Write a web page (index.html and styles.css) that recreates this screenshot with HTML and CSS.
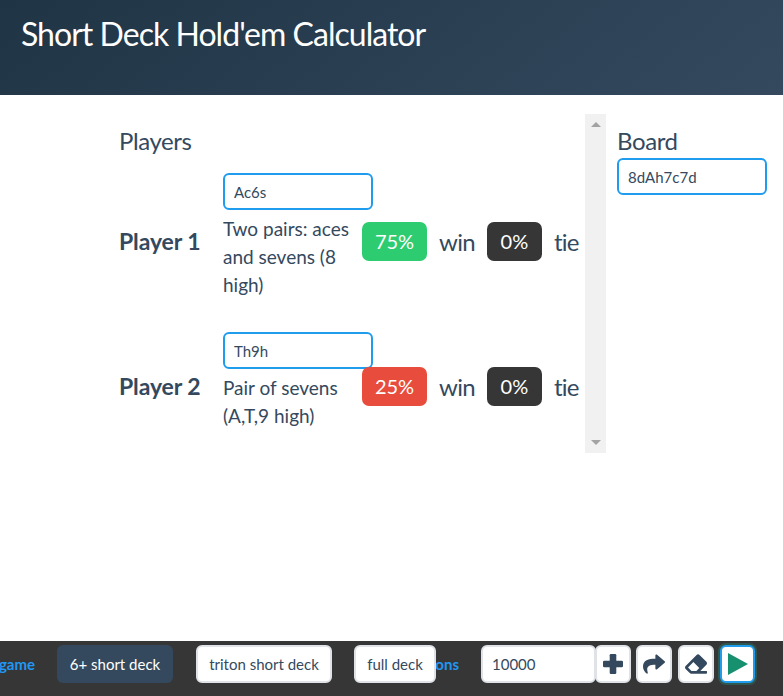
FILE: index.html
```html
<!DOCTYPE html>
<html lang="en">
<head>
    <meta charset="UTF-8">
    <meta name="viewport" content="width=device-width, initial-scale=1.0">
    <title>Short Deck Hold'em Calculator</title>
    <link rel="stylesheet" href="styles.css">
</head>
<body>
    <header class="hero">
        <h1>Short Deck Hold'em Calculator</h1>
    </header>
    <main class="content">
        <section class="players-panel">
            <div class="players-list">
                <h2 class="section-title">Players</h2>
                <div class="player">
                    <div class="player-name">Player 1</div>
                    <div class="player-hand">
                        <input class="card-input" type="text" value="Ac6s">
                        <p class="hand-text">Two pairs: aces and sevens (8 high)</p>
                    </div>
                    <div class="player-result">
                        <span class="tag tag-win">75%</span>
                        <span class="result-word">win</span>
                        <span class="tag tag-tie">0%</span>
                        <span class="result-word">tie</span>
                    </div>
                </div>
                <div class="player">
                    <div class="player-name">Player 2</div>
                    <div class="player-hand">
                        <input class="card-input" type="text" value="Th9h">
                        <p class="hand-text">Pair of sevens (A,T,9 high)</p>
                    </div>
                    <div class="player-result">
                        <span class="tag tag-lose">25%</span>
                        <span class="result-word">win</span>
                        <span class="tag tag-tie">0%</span>
                        <span class="result-word">tie</span>
                    </div>
                </div>
            </div>
            <div class="scrollbar">
                <span class="arrow-up"></span>
                <span class="arrow-down"></span>
            </div>
        </section>
        <section class="board-panel">
            <h2 class="section-title">Board</h2>
            <input class="card-input" type="text" value="8dAh7c7d">
        </section>
    </main>
    <footer class="toolbar">
        <span class="field-label label-game">game</span>
        <button class="btn btn-active btn-short">6+ short deck</button>
        <button class="btn btn-triton">triton short deck</button>
        <button class="btn btn-full">full deck</button>
        <span class="field-label label-iter">iterations</span>
        <input class="iter-input" type="text" value="10000">
        <button class="btn btn-icon btn-plus" aria-label="add player">
            <svg class="icon-plus" viewBox="0 0 20 20"><rect x="6.7" y="0" width="6.6" height="20" rx="1.2"/><rect x="0" y="6.7" width="20" height="6.6" rx="1.2"/></svg>
        </button>
        <button class="btn btn-icon" aria-label="share">
            <svg class="icon" viewBox="0 0 512 512"><path d="M503.691 189.836L327.687 37.851C312.281 24.546 288 35.347 288 56.015v80.053C127.371 137.907 0 170.1 0 322.326c0 61.441 39.581 122.309 83.333 154.132 13.653 9.931 33.111-2.533 28.077-18.631C66.066 312.814 132.917 274.316 288 272.085V360c0 20.7 24.3 31.453 39.687 18.164l176.004-152c11.071-9.562 11.086-26.753 0-36.328z"/></svg>
        </button>
        <button class="btn btn-icon btn-wide-gap" aria-label="clear">
            <svg class="icon" viewBox="0 0 512 512"><path d="M497.941 273.941c18.745-18.745 18.745-49.137 0-67.882l-160-160c-18.745-18.745-49.136-18.746-67.883 0l-256 256c-18.745 18.745-18.745 49.137 0 67.882l96 96A48.004 48.004 0 0 0 144 480h356c6.627 0 12-5.373 12-12v-40c0-6.627-5.373-12-12-12H355.883l142.058-142.059zm-302.627-62.627l137.373 137.373L265.373 416H150.628l-80-80 124.686-124.686z"/></svg>
        </button>
        <button class="btn btn-icon btn-wide-gap btn-play" aria-label="run">
            <svg class="icon-play" viewBox="0 0 20 22"><polygon points="0,0 20,11 0,22"/></svg>
        </button>
    </footer>
</body>
</html>
```

FILE: styles.css
```css
* {
    box-sizing: border-box;
}
html, body {
    height: 100%;
}
body {
    margin: 0;
    display: flex;
    flex-direction: column;
    overflow: hidden;
    background-color: #fff;
    color: #34495e;
    font-family: Lato, "Open Sans", sans-serif;
    font-size: 19px;
}
.hero {
    height: 95px;
    padding: 14px 21px;
    background: linear-gradient(141deg, #1f3545 0%, #34495e 100%);
}
.hero h1 {
    margin: 0;
    color: #fff;
    font-size: 32px;
    font-weight: 400;
    letter-spacing: -0.97px;
    line-height: 40px;
}
.content {
    flex: 1;
    display: flex;
    align-items: flex-start;
    padding: 19px 0 0 119px;
}
.players-panel {
    display: flex;
    width: 487px;
    height: 339px;
}
.players-list {
    width: 466px;
    padding-top: 13px;
}
.section-title {
    margin: 0;
    font-size: 24px;
    font-weight: 400;
    letter-spacing: -0.4px;
    line-height: 28px;
}
.players-list .section-title {
    margin-bottom: 18px;
}
.player {
    display: flex;
    align-items: center;
    margin-bottom: 23px;
}
.player-name {
    flex: none;
    width: 104px;
    font-size: 23px;
    font-weight: 700;
    letter-spacing: -0.1px;
}
.player-hand {
    flex: none;
    width: 139px;
    padding-bottom: 10px;
}
.hand-text {
    margin: 5px 0 0;
    line-height: 28px;
}
.player-result {
    display: flex;
    align-items: center;
    flex: none;
}
.card-input {
    display: block;
    width: 150px;
    height: 37px;
    padding: 0 9px;
    border: 2px solid #209cee;
    border-radius: 6px;
    background: #fff;
    color: #34495e;
    font-family: inherit;
    font-size: 15px;
    outline: none;
}
.tag {
    display: flex;
    align-items: center;
    justify-content: center;
    height: 39px;
    border-radius: 7px;
    color: #fff;
    font-size: 20px;
}
.tag-win {
    width: 65px;
    background: #2ecc71;
}
.tag-lose {
    width: 65px;
    background: #e74c3c;
}
.tag-tie {
    width: 55px;
    background: #363636;
}
.result-word {
    margin: 0 12px;
    font-size: 24px;
    letter-spacing: -0.7px;
}
.scrollbar {
    display: flex;
    flex-direction: column;
    align-items: center;
    justify-content: space-between;
    flex: none;
    width: 21px;
    padding: 8px 0;
    background: #f1f1f1;
}
.arrow-up, .arrow-down {
    width: 0;
    height: 0;
    border-left: 5px solid transparent;
    border-right: 5px solid transparent;
}
.arrow-up {
    border-bottom: 5px solid #a3a3a3;
}
.arrow-down {
    border-top: 5px solid #a3a3a3;
}
.board-panel {
    margin-left: 11px;
}
.board-panel .section-title {
    margin-top: 13px;
    margin-bottom: 3px;
}
.toolbar {
    display: flex;
    align-items: flex-start;
    flex: none;
    height: 55px;
    padding-top: 4px;
    background: #363636;
}
.field-label {
    display: flex;
    justify-content: flex-end;
    height: 38px;
    align-items: center;
    color: #2196f3;
    font-size: 15px;
    font-weight: 700;
    white-space: nowrap;
}
.label-game {
    width: 35px;
    margin-right: 22px;
}
.label-iter {
    width: 23px;
    margin-right: 22px;
}
.btn {
    position: relative;
    height: 38px;
    border: 2px solid #dfe3e8;
    border-radius: 6px;
    background: #fff;
    color: #34495e;
    font-family: inherit;
    font-size: 15px;
    padding: 0;
    cursor: pointer;
}
.btn-active {
    border-color: transparent;
    background: #34495e;
    color: #fff;
}
.btn-short {
    width: 116px;
    margin-right: 23px;
}
.btn-triton {
    width: 136px;
    margin-right: 22px;
}
.btn-full {
    width: 82px;
}
.iter-input {
    width: 115px;
    height: 38px;
    padding: 0 9px;
    border: 2px solid #dfe3e8;
    border-radius: 6px;
    background: #fff;
    color: #34495e;
    font-family: inherit;
    font-size: 15px;
    outline: none;
}
.btn-icon {
    display: flex;
    align-items: center;
    justify-content: center;
    width: 36px;
    margin-left: 5px;
}
.btn-plus {
    margin-left: -1px;
}
.btn-wide-gap {
    margin-left: 6px;
}
.btn-play {
    width: 35px;
    border-color: #209cee;
    box-shadow: 0 0 0 2px rgba(26, 188, 156, 0.25);
}
.icon {
    width: 22px;
    height: 22px;
    fill: #34495e;
}
.icon-plus {
    width: 20px;
    height: 20px;
    fill: #34495e;
}
.icon-play {
    width: 20px;
    height: 22px;
    fill: #16906f;
}
```
